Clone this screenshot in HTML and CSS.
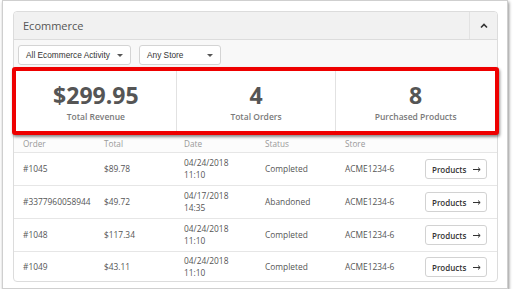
FILE: index.html
```html
<!DOCTYPE html>
<html lang="en">
<head>
  <meta charset="UTF-8" />
  <title>Ecommerce</title>
  <link rel="stylesheet" href="styles.css">
</head>
<body>

  <div class="frame">
    <div class="panel">
      <!-- Header -->
      <div class="panel-head">
        <span class="panel-title">Ecommerce</span>
        <button class="collapse-btn" aria-label="Collapse">
          <svg width="8" height="6" viewBox="0 0 8 6">
            <path d="M1 4.5 L4 1.5 L7 4.5" fill="none" stroke="#333" stroke-width="1.6"/>
          </svg>
        </button>
      </div>

      <!-- Filters -->
      <div class="filters">
        <div class="select wide">All Ecommerce Activity <span class="caret"></span></div>
        <div class="select">Any Store <span class="caret"></span></div>
      </div>

      <!-- Stats -->
      <div class="stats">
        <div class="stat">
          <div class="stat-value">$299.95</div>
          <div class="stat-label">Total Revenue</div>
        </div>
        <div class="stat">
          <div class="stat-value">4</div>
          <div class="stat-label">Total Orders</div>
        </div>
        <div class="stat">
          <div class="stat-value">8</div>
          <div class="stat-label">Purchased Products</div>
        </div>
      </div>

      <!-- Orders -->
      <div class="orders">
        <div class="row head">
          <span>Order</span><span>Total</span><span>Date</span><span>Status</span><span>Store</span><span></span>
        </div>
        <div class="row">
          <span>#1045</span><span>$89.78</span><span>04/24/2018<br>11:10</span><span>Completed</span><span>ACME1234-6</span>
          <span><button class="products-btn">Products <svg width="8" height="5" viewBox="0 0 8 5"><path d="M0 2.5 H7 M5 0.5 L7.2 2.5 L5 4.5" fill="none" stroke="#333" stroke-width="1"/></svg></button></span>
        </div>
        <div class="row">
          <span>#3377960058944</span><span>$49.72</span><span>04/17/2018<br>14:35</span><span>Abandoned</span><span>ACME1234-6</span>
          <span><button class="products-btn">Products <svg width="8" height="5" viewBox="0 0 8 5"><path d="M0 2.5 H7 M5 0.5 L7.2 2.5 L5 4.5" fill="none" stroke="#333" stroke-width="1"/></svg></button></span>
        </div>
        <div class="row">
          <span>#1048</span><span>$117.34</span><span>04/24/2018<br>11:10</span><span>Completed</span><span>ACME1234-6</span>
          <span><button class="products-btn">Products <svg width="8" height="5" viewBox="0 0 8 5"><path d="M0 2.5 H7 M5 0.5 L7.2 2.5 L5 4.5" fill="none" stroke="#333" stroke-width="1"/></svg></button></span>
        </div>
        <div class="row last">
          <span>#1049</span><span>$43.11</span><span>04/24/2018<br>11:10</span><span>Completed</span><span>ACME1234-6</span>
          <span><button class="products-btn">Products <svg width="8" height="5" viewBox="0 0 8 5"><path d="M0 2.5 H7 M5 0.5 L7.2 2.5 L5 4.5" fill="none" stroke="#333" stroke-width="1"/></svg></button></span>
        </div>
      </div>
    </div>
  </div>

</body>
</html>
```

FILE: styles.css
```css
* { box-sizing: border-box; margin: 0; padding: 0; }

body {
  background: #ffffff;
  font-family: "Open Sans", sans-serif;
  color: #555;
}

.frame {
  margin-left: 2px;
  width: 506px;
  height: 289px;
  border: 1px solid #cfcfcf;
  background: #fff;
  box-shadow: 1px 2px 3px rgba(0, 0, 0, 0.45);
  padding: 10px 9px 0 10px;
}

.panel {
  border: 1px solid #dcdcdc;
  border-radius: 4px;
  background: #fff;
  height: 271px;
}

/* Header */
.panel-head {
  display: flex;
  align-items: stretch;
  height: 28px;
  background: #f1f1f1;
  border-bottom: 1px solid #dcdcdc;
  border-radius: 4px 4px 0 0;
}

.panel-title {
  flex: 1;
  font-size: 11px;
  line-height: 27px;
  padding-left: 9px;
  color: #555;
}

.collapse-btn {
  width: 28px;
  border: none;
  border-left: 1px solid #e2e2e2;
  background: #f1f1f1;
  border-radius: 0 4px 0 0;
  display: flex;
  align-items: center;
  justify-content: center;
  padding-top: 1px;
}

/* Filters */
.filters {
  display: flex;
  gap: 8px;
  background: #f8f8f8;
  padding: 5px 4px 3px;
  height: 27px;
}

.select {
  width: 82px;
  height: 20px;
  border: 1px solid #d4d4d4;
  border-radius: 3px;
  background: #fff;
  font-family: "Liberation Sans", Arial, sans-serif;
  font-size: 8.3px;
  color: #333;
  white-space: nowrap;
  display: flex;
  align-items: center;
  justify-content: space-between;
  padding: 0 7px 0 7px;
}

.select.wide { width: 113px; }

.caret {
  width: 0;
  height: 0;
  border-left: 3px solid transparent;
  border-right: 3px solid transparent;
  border-top: 3px solid #555;
  margin-top: 1px;
}

/* Stats (highlighted) */
.stats {
  display: grid;
  grid-template-columns: repeat(3, 1fr);
  margin: 0 -2px;
  height: 68px;
  border: 4px solid #ee0000;
  border-radius: 3px;
  background: #fff;
  box-shadow: 1px 2px 3px rgba(0, 0, 0, 0.45);
  position: relative;
}

.stat {
  text-align: center;
  border-left: 1px solid #e2e2e2;
  padding-top: 9px;
}

.stat:first-child { border-left: none; }

.stat-value {
  font-size: 23px;
  font-weight: 700;
  line-height: 30px;
  color: #555;
}

.stat-label {
  font-size: 8.5px;
  font-weight: 600;
  color: #7a7a7a;
  margin-top: 1px;
}

/* Orders */
.row {
  display: grid;
  grid-template-columns: 81px 80px 81px 80px 80px 1fr;
  align-items: center;
  padding-left: 9px;
  height: 33px;
  border-top: 1px solid #e6e6e6;
  font-size: 8.4px;
  line-height: 12px;
  color: #555;
}

.row.last { height: 31px; }

.row.head {
  height: 17px;
  border-top: none;
  font-size: 8.2px;
  color: #999;
  background: #fcfcfc;
}

.products-btn {
  width: 62px;
  height: 20px;
  border: 1px solid #d2d2d2;
  border-radius: 3px;
  background: #fff;
  font-family: "Open Sans", sans-serif;
  font-size: 8px;
  font-weight: 600;
  color: #333;
  display: flex;
  align-items: center;
  justify-content: space-between;
  padding: 0 5px 0 6px;
}
```
